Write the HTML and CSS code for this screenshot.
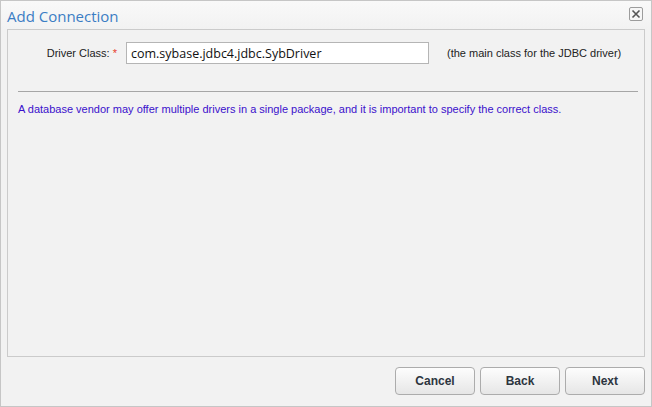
FILE: index.html
```html
<!DOCTYPE html>
<html>
<head>
<meta charset="utf-8">
<link rel="stylesheet" href="styles.css">
</head>
<body>
<div class="dialog">
  <div class="titlebar">
    <span class="title">Add Connection</span>
    <span class="close"><svg width="10" height="10" viewBox="0 0 10 10"><path d="M1.5 1.5 L8.5 8.5 M8.5 1.5 L1.5 8.5" stroke="#555" stroke-width="1.6" fill="none"/></svg></span>
  </div>
  <div class="panel">
    <div class="row">
      <label class="label">Driver Class: <span class="req">*</span></label>
      <input class="field" type="text" value="com.sybase.jdbc4.jdbc.SybDriver">
      <span class="hint">(the main class for the JDBC driver)</span>
    </div>
    <div class="rule"></div>
    <p class="info">A database vendor may offer multiple drivers in a single package, and it is important to specify the correct class.</p>
  </div>
  <div class="buttons">
    <button class="btn">Cancel</button>
    <button class="btn">Back</button>
    <button class="btn">Next</button>
  </div>
</div>
</body>
</html>
```
FILE: styles.css
```css
html, body {
  margin: 0;
  padding: 0;
  background: #f2f2f2;
}
.dialog {
  width: 652px;
  height: 407px;
  box-sizing: border-box;
  border: 1px solid #c6c6c6;
  background: #f2f2f2;
  display: flex;
  flex-direction: column;
}
.titlebar {
  height: 28px;
  display: flex;
  align-items: center;
  justify-content: space-between;
  padding: 0 8px 0 6px;
  background: linear-gradient(#f9f9f9, #f2f2f2);
}
.title {
  font-family: "Open Sans", "Noto Sans", sans-serif;
  font-size: 15px;
  color: #3b7dc4;
  margin-top: 2px;
}
.close {
  width: 12px;
  height: 12px;
  border: 1px solid #9c9c9c;
  border-radius: 2px;
  background: #f6f6f6;
  display: flex;
  align-items: center;
  justify-content: center;
  margin-top: -2px;
}
.panel {
  margin: 0 6px;
  height: 328px;
  box-sizing: border-box;
  border: 1px solid #cbcbcb;
  padding: 12px 0 0 0;
}
.row {
  display: flex;
  align-items: center;
  height: 22px;
}
.label {
  width: 112px;
  box-sizing: border-box;
  padding-right: 3px;
  text-align: right;
  font-family: "Liberation Sans", Arial, sans-serif;
  font-size: 11px;
  color: #222;
}
.req {
  color: #e8402a;
}
.field {
  margin: 0 0 0 6px;
  width: 303px;
  height: 22px;
  box-sizing: border-box;
  border: 1px solid #b5b5b5;
  background: #fff;
  padding: 0 0 0 4px;
  font-family: "Open Sans", "Noto Sans", sans-serif;
  font-size: 12.5px;
  color: #111;
  outline: none;
}
.hint {
  margin-left: 18px;
  font-family: "Liberation Sans", Arial, sans-serif;
  font-size: 11px;
  color: #222;
}
.rule {
  height: 0;
  border-top: 1px solid #a6a6a6;
  margin: 27px 6px 0 10px;
}
.info {
  margin: 11px 0 0 10px;
  font-family: "Liberation Sans", Arial, sans-serif;
  font-size: 11px;
  color: #3a10cc;
}
.buttons {
  display: flex;
  justify-content: flex-end;
  gap: 5px;
  padding: 10px 6px 0 0;
}
.btn {
  width: 80px;
  height: 28px;
  box-sizing: border-box;
  border: 1px solid #acacac;
  border-radius: 4px;
  background: linear-gradient(#fdfdfd, #e6e6e6);
  font-family: "Liberation Sans", Arial, sans-serif;
  font-weight: bold;
  font-size: 12px;
  color: #2d3540;
  padding: 0;
}
```
